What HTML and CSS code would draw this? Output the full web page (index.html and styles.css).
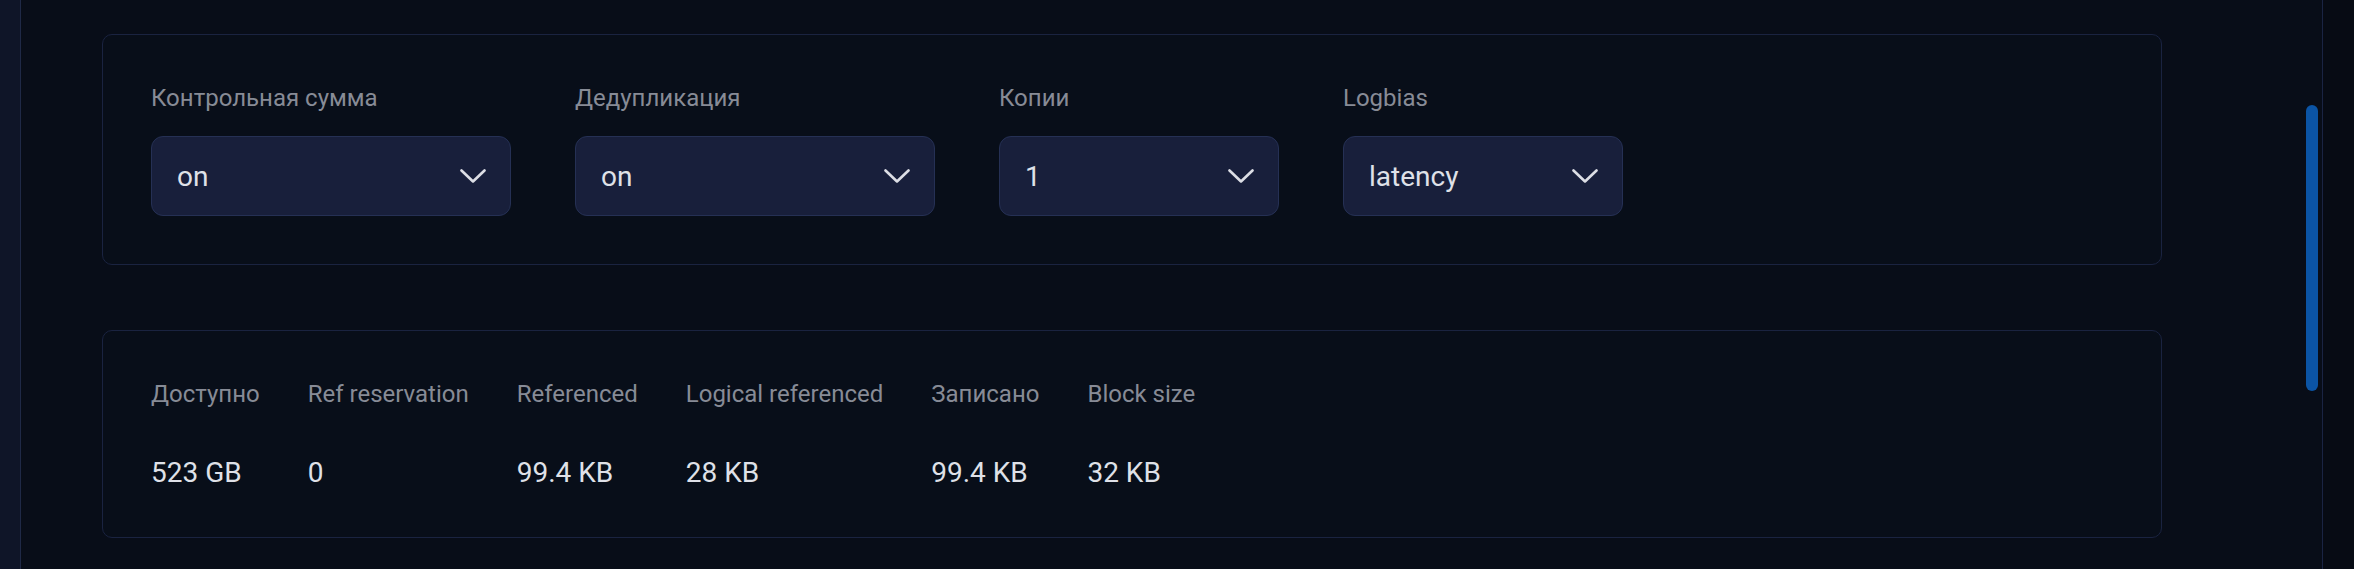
FILE: index.html
```html
<!DOCTYPE html>
<html lang="ru">
<head>
<meta charset="utf-8">
<title>Dataset properties</title>
<link rel="stylesheet" href="styles.css">
</head>
<body>
<div class="app">
  <aside class="sidebar"></aside>
  <main class="main">
    <div class="content">
      <section class="card settings">
        <div class="field field-wide">
          <div class="label">Контрольная сумма</div>
          <div class="select"><span class="select-value">on</span><svg class="chev" viewBox="0 0 26 15" width="26" height="15"><polyline points="1.5,1.5 13,12.5 24.5,1.5"/></svg></div>
        </div>
        <div class="field field-wide">
          <div class="label">Дедупликация</div>
          <div class="select"><span class="select-value">on</span><svg class="chev" viewBox="0 0 26 15" width="26" height="15"><polyline points="1.5,1.5 13,12.5 24.5,1.5"/></svg></div>
        </div>
        <div class="field field-narrow">
          <div class="label">Копии</div>
          <div class="select"><span class="select-value">1</span><svg class="chev" viewBox="0 0 26 15" width="26" height="15"><polyline points="1.5,1.5 13,12.5 24.5,1.5"/></svg></div>
        </div>
        <div class="field field-narrow">
          <div class="label">Logbias</div>
          <div class="select"><span class="select-value">latency</span><svg class="chev" viewBox="0 0 26 15" width="26" height="15"><polyline points="1.5,1.5 13,12.5 24.5,1.5"/></svg></div>
        </div>
      </section>
      <section class="card stats">
        <div class="stat"><div class="label">Доступно</div><div class="value">523 GB</div></div>
        <div class="stat"><div class="label">Ref reservation</div><div class="value">0</div></div>
        <div class="stat"><div class="label">Referenced</div><div class="value">99.4 KB</div></div>
        <div class="stat"><div class="label">Logical referenced</div><div class="value">28 KB</div></div>
        <div class="stat"><div class="label">Записано</div><div class="value">99.4 KB</div></div>
        <div class="stat"><div class="label">Block size</div><div class="value">32 KB</div></div>
      </section>
    </div>
    <div class="scroll-thumb"></div>
  </main>
  <aside class="rightpane"></aside>
</div>
</body>
</html>
```
FILE: styles.css
```css
* { box-sizing: border-box; }
html, body {
  margin: 0;
  height: 100%;
  background: #080d18;
  font-family: Roboto, "Noto Sans", "Liberation Sans", sans-serif;
  overflow: hidden;
}
.app {
  display: flex;
  height: 569px;
}
.sidebar {
  width: 21px;
  flex: none;
  background: #0f1528;
  border-right: 1px solid #1f2946;
}
.main {
  flex: 1;
  position: relative;
  background: #080d18;
  padding: 34px 0 0 81px;
}
.content {
  width: 2060px;
  display: flex;
  flex-direction: column;
  gap: 65px;
}
.card {
  border: 1px solid #1a2340;
  border-radius: 10px;
  background: #080e19;
  padding: 48px;
}
.settings {
  display: flex;
  gap: 64px;
}
.field {
  display: flex;
  flex-direction: column;
  gap: 22px;
}
.field-wide { width: 360px; }
.field-narrow { width: 280px; }
.label {
  font-size: 24px;
  line-height: 31px;
  color: #878b96;
  white-space: nowrap;
}
.select {
  height: 80px;
  border: 1px solid #253054;
  border-radius: 12px;
  background: #181f3b;
  display: flex;
  align-items: center;
  justify-content: space-between;
  padding: 0 24px 0 25px;
}
.select-value {
  font-size: 28px;
  line-height: 32px;
  padding-top: 2px;
  color: #dfe1e8;
}
.chev {
  display: block;
  fill: none;
  stroke: #dcdee5;
  stroke-width: 2.6;
  stroke-linecap: round;
  stroke-linejoin: round;
}
.stats {
  display: flex;
  gap: 48px;
}
.stat {
  display: flex;
  flex-direction: column;
  gap: 47px;
}
.value {
  font-size: 28px;
  line-height: 32px;
  color: #dfe1e8;
  white-space: nowrap;
}
.scroll-thumb {
  position: absolute;
  right: 4px;
  top: 105px;
  width: 12px;
  height: 286px;
  border-radius: 6px;
  background: #0b54a5;
}
.rightpane {
  width: 32px;
  flex: none;
  background: #070b14;
  border-left: 1px solid #1a2443;
}
```
